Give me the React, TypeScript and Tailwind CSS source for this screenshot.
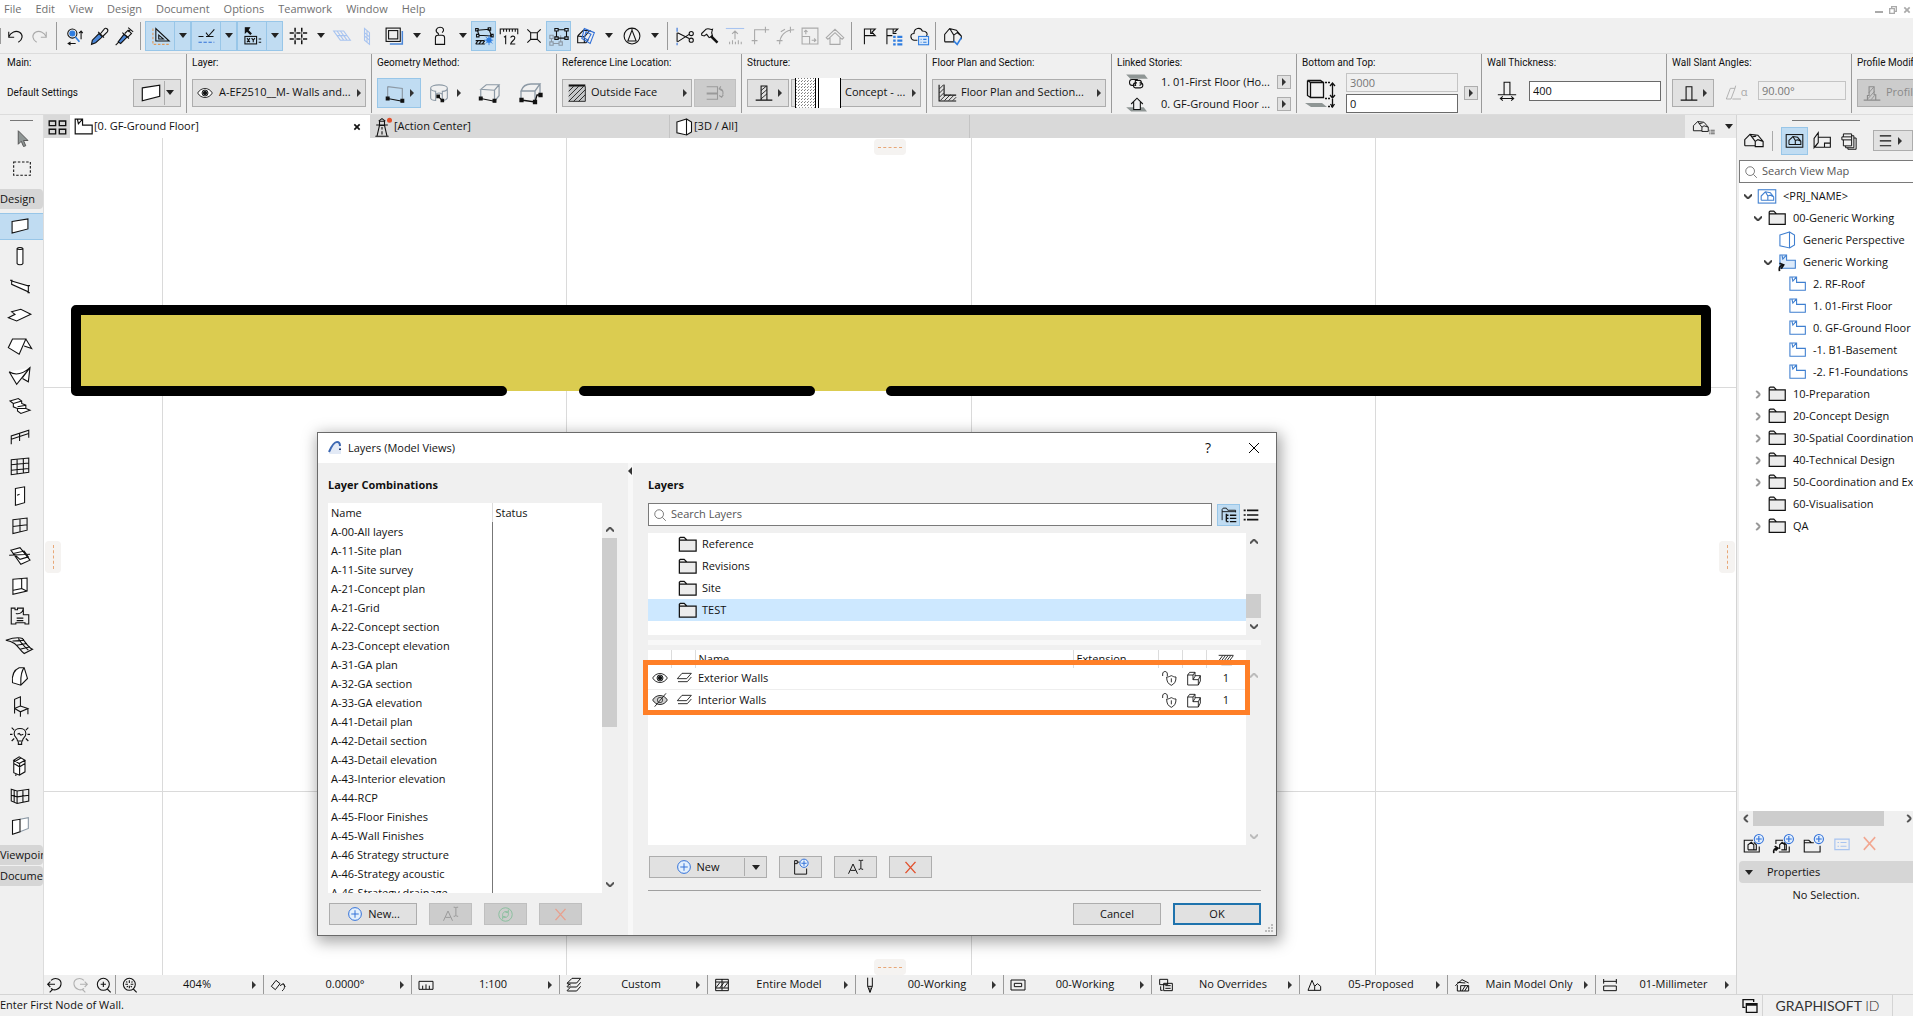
import type { ReactNode } from 'react';

const icons: Record<string, ReactNode> = {
  undo: <path d="M4.500 7v6.500H11M4.500 13C7 7 13 5 17.500 7.500c4.500 3 4 8.500-1.500 12" />,
  redo: <path d="M19.500 7v6.500H13M19.500 13C17 7 11 5 6.500 7.500c-4.500 3-4 8.500 1.500 12" />,
  findSelect: (
    <>
      <circle cx="10" cy="9" r="5.500" />
      <circle cx="10" cy="9" r="3" fill="#2f7de0" stroke="#2f7de0" />
      <path d="M13.500 13l5 6" stroke="#2f7de0" strokeWidth="2" />
      <path d="M20.500 16V6M18 8.500L20.500 6l2 2.500M14 21H5M8 19l-3 2 3 2" />
    </>
  ),
  eyedropper: (
    <>
      <path d="M3 22l1-5 8-8 4 4-8 7z" fill="#4a86d8" />
      <path d="M11 7l7 7M14 9l4-5c2-3 6 0 4 3l-5 5" />
    </>
  ),
  syringe: (
    <>
      <path d="M5 19l7-9 4 3-8 8z" fill="#4a86d8" />
      <path d="M2 23l4-4M10 8l8 7M13 9l4-4 4 4-4 4M17 2l6 5M20 4l-3 3" />
    </>
  ),
  setSquare: (
    <>
      <path d="M7 3v15h16zM10.500 11v4.500H16z" />
      <path d="M3.500 3v19H23" stroke="#e09a5a" strokeDasharray="3 2" />
    </>
  ),
  guide: (
    <>
      <path d="M3 12.500h6M12 12.500h9M12 8l3 4 7-8" />
      <path d="M3 19.500h19" stroke="#2f6fd8" strokeDasharray="4 2" />
    </>
  ),
  xy: (
    <>
      <path d="M4 2v6l2-2 4 4 1-1-4-4 2-3z" fill="currentColor" />
      <rect x="3.500" y="12.500" width="14" height="9" />
      <path d="M6 14.500l3.500 5M9.500 14.500l-3.500 5M11.500 14.500l2 2.500 2-2.500M13.500 17v2.500M20 15.500h3M20 19.500h3" />
    </>
  ),
  grid: (
    <path
      d="M8.500 2v5M8.500 10v4M8.500 17v5M16.500 2v5M16.500 10v4M16.500 17v5M2 8.500h5M10 8.500h5M18 8.500h5M2 15.500h5M10 15.500h5M18 15.500h5M8 8.500h1M16 8.500h1M8 15.500h1M16 15.500h1"
      strokeWidth="1.800"
    />
  ),
  planeFlat: <path d="M2 6h12l8 11H10zM6 11.500h12M6 6l8 11M10 6l8 11" stroke="#a8c4f0" />,
  planeVertical: <path d="M9 3l6 5v14l-6-5zM12 5.500v14M9 8l6 5M9 12l6 5" stroke="#a8c4f0" />,
  frame: (
    <>
      <path d="M7 21.500h15V6" stroke="#4a86d8" strokeWidth="1.800" />
      <rect x="2.500" y="2.500" width="17" height="16" />
      <rect x="5.500" y="5.500" width="11" height="10" />
    </>
  ),
  weight: <path d="M6.500 22v-8c0-2 1-3 3-3h5c2 0 3 1 3 3v8zM10 11V9C5 6 8 1.500 12 1.500S18 5 14.500 8" />,
  trace: (
    <>
      <path d="M4 5l14-1 3 8-15-1zM2 3h3v3H2zM17 2h3v3h-3zM3 10h3v3H3zM20 10h3v3h-3z" />
      <path d="M2 21.500l3-4M6 21.500l3-4M10 21.500l3-4M2 21.500h11M2 17.500h11" />
      <circle cx="18" cy="17" r="2.500" fill="#2f7de0" stroke="#2f7de0" />
      <path d="M18 11v12M12 17h11M14 13l8 8M22 13l-8 8" stroke="#2f7de0" strokeWidth="1" />
    </>
  ),
  ruler: <path d="M1.500 10V3.500h21V10M5.500 4v3M9 4v3M12.500 4v3M16 4v3M19.500 4v3M6 13.500l2-1.500v10M14 14c1-3 5-2 5 0 0 3-4 4-5 7.500h5.500" />,
  snap: <path d="M8 8h8v8H8zM4 4l4 4M16 16l4 4M20 4l-4 4M8 16l-4 4" />,
  nodes: (
    <>
      <path d="M1 11h4v4H1zM1 19h4v4H1zM12 19h4v4h-4zM3 15v4M5 21h7M14 11v8" stroke="#8c99a5" />
      <path d="M7 3h4v3H7zM19 3h4v3h-4zM7 13h4v3H7zM19 13h4v3h-4zM11 4.500h8M9 6v7M21 6v7M11 14.500h8" />
    </>
  ),
  cubeCut: (
    <>
      <path d="M2 12L9 5l9 1M2 12v8h10l3-4M2 12l8 1 6-7M10 13v7" />
      <path d="M10 3l12 5-5 13-10-6zM12 7l6 3-4 7-4-3z" stroke="#2f6fd8" />
    </>
  ),
  compass: (
    <>
      <circle cx="12" cy="12" r="9.500" />
      <path d="M12 5L7 18h10zM12 5V2.500" />
    </>
  ),
  scissors: (
    <>
      <path d="M2.500 2v5M2.500 20v3" stroke="#2f6fd8" />
      <path d="M2.500 8v11M3 8l14 7M3 19l14-9" />
      <circle cx="19.500" cy="9" r="2.500" />
      <circle cx="19.500" cy="17" r="2.500" />
    </>
  ),
  wrench: (
    <>
      <path d="M2 9l5-5c4-2 4 1 8 0l-1 4 1 4-4 2-3-4-3 2-3-1z" />
      <path d="M13 12l8 8" strokeWidth="3" />
    </>
  ),
  raise: (
    <>
      <path d="M1 3h22" stroke="#a8c4f0" />
      <path d="M12 16V6M8.500 9.500L12 6l3.500 3.500M5.500 22v-3M9 22v-5M12.500 22v-3M16 22v-5M19.500 22v-3" />
    </>
  ),
  corner: <path d="M5.500 22V4.500H23M2 17.500h7M18.500 1v7" />,
  fillet: <path d="M5.500 22C5.500 12 12 4.500 23 4.500M2 17.500h7M18.500 1v7M7 7l5-3" />,
  resize: <path d="M2.500 12V2.500h19v19H12M2.500 12.500h9v9h-9zM7 10V5M5 7l2-2 2 2M14 17h5M17 15l2 2-2 2" />,
  roofHouse: <path d="M1.500 14L12 4l10.500 10-2 2L12 8l-8.500 8zM6 14v8h12v-8" />,
  flag: <path d="M6.500 22V3.500h13l-4 4 4 4h-13M14 4v5h4" />,
  flagList: (
    <>
      <path d="M3.500 22V3.500h13l-4 4M3.500 11.500H10M11 4v5h4" />
      <path d="M11 13h3M16 13h6M11 17.500h3M16 17.500h6M11 22h3M16 22h6" stroke="#2f7de0" strokeWidth="2.500" />
    </>
  ),
  cloudList: (
    <>
      <path d="M10 17H6c-5-1-5-8 0-8 0-7 8-8 10-3 5 0 7 3 5 6" />
      <rect x="11.500" y="12.500" width="12" height="10" fill="#d8e8fa" stroke="#2f7de0" />
      <path d="M14 16h1M17 16h4M14 19.500h1M17 19.500h4" stroke="#2f7de0" />
    </>
  ),
  houseCheck: (
    <>
      <path d="M2 19v-9l6-7 8 2 6 7v4M2 19h11v-8L8 3M13 11l4-3 5 4" />
      <path d="M13 18l4 4 5-8" stroke="#2f7de0" strokeWidth="2" />
    </>
  ),
  wall: <path d="M2.500 6.500l19-3v12l-19 5z" fill="#fff" />,
  wallStraight: (
    <>
      <path d="M4 5l16 2v12M4 5v12" stroke="#8c99a5" />
      <path d="M4 18l16 3" />
      <path d="M2.500 16.500h3v3h-3zM18.500 19h3v3h-3z" fill="currentColor" />
    </>
  ),
  wallCurved: (
    <>
      <path d="M2 6c0-5 20-5 20 0v12c-1 2-3 3-6 3v-6c0-4-8-4-8 0v6c-3 0-6-1-6-3zM2 6c0 3 4 4 6 4V15M22 6c0 3-3 4-6 4v5" stroke="#8c99a5" />
      <path d="M11 16l5 5" />
      <path d="M9.500 14.500h3v3h-3zM14.500 19.500h3v3h-3z" fill="currentColor" />
    </>
  ),
  wallBox: (
    <>
      <path d="M3 8l6-5h14l-5 6zM3 8v10M18 9v12M23 3v12l-5 6" stroke="#8c99a5" />
      <path d="M3 18l15 3" />
      <path d="M1.500 16.500h3v3h-3zM16.500 19h3v3h-3z" fill="currentColor" />
    </>
  ),
  wallChain: (
    <>
      <path d="M2 10c2-6 6-7 10-7h9l-5 7H5zM16 10v11M21 3v10M2 10v9" stroke="#8c99a5" />
      <path d="M2 19l14 2 2-7h4" />
      <path d="M1 17.500h3v3H1zM14.500 19.500h3v3h-3zM20 12.500h3v3h-3z" fill="currentColor" />
    </>
  ),
  hatchBlock: (
    <>
      <rect x="2" y="4" width="20" height="18" fill="#c4c6c8" stroke="none" />
      <path d="M22 4v18H2M2 10l6-6M2 16L14 4M2 22L20 4M8 22L22 8M14 22l8-8" strokeWidth="1" />
      <path d="M2 3h20" strokeWidth="2.500" />
    </>
  ),
  flip: <path d="M2 4.500h13v15H2M2 12h13M2 13h13M17 7c5 0 6 6 3 10M19 4l-2 3 3 2M17 15l3 2 2-3" />,
  structure: (
    <>
      <path d="M2 20.500h20M8.500 20V3.500h7V20" />
      <path d="M8.500 9l6-5M8.500 14l7-6M8.500 19l7-6" strokeWidth="1" />
    </>
  ),
  slant: <path d="M2 20.500h20M8.500 20V4.500h7V20" />,
  sectionHatch: (
    <>
      <path d="M2.500 2v19.500H23M8.500 2v12.500H23" />
      <path d="M3 7l5-5M3 12l5-5M3 17l5-5M4 21l7-7M9 21l7-7M14 21l6-6M19 21l4-4" strokeWidth="1" />
    </>
  ),
  linkTop: (
    <>
      <path d="M-1 3h22l4 5H4z" fill="#8f9695" stroke="none" />
      <path d="M13 9H6c-4 0-4 7 0 7h3M12 13h-2c-3 0-3 6 0 6h6c4 0 4-6 0-6h-1M11 16h-1V10h5c3 0 3 6 0 6" />
    </>
  ),
  linkBottom: (
    <>
      <path d="M-1 16h21l4 5H5z" fill="#8f9695" stroke="none" />
      <path d="M5 12l7-7 7 7M8 10v8.500h8V10" fill="#f0f0f0" />
    </>
  ),
  thickness: <path d="M1 16.500h22M8.500 16V1.500h7V16M4 21h16M7 18.500L4 21l3 2.500M17 18.500l3 2.500-3 2.500" />,
  alpha: <path d="M2 21L8 5h7L9 21zM15 5l1-4M11 21h13" />,
  profile: (
    <>
      <path d="M2 20.500h20M6.500 20v-5h2V4.500h6V14h2v6" />
      <path d="M8 12l6-7M7 19l8-9M11 20l4-5" strokeWidth="1" />
    </>
  ),
  eye: (
    <>
      <path d="M1 12c5-9 17-9 22 0-5 9-17 9-22 0z" fill="#fff" />
      <circle cx="12" cy="12" r="4.500" fill="#9aa0a4" />
      <circle cx="12" cy="12" r="2.500" fill="currentColor" />
    </>
  ),
  eyeOff: (
    <>
      <path d="M1 12c5-9 17-9 22 0-5 9-17 9-22 0z" fill="#d0d0d0" />
      <circle cx="12" cy="12" r="4" strokeWidth="1" />
      <path d="M4 22L21 2" />
    </>
  ),
  tiles: <path d="M3.500 5.500h7v5h-7zM14.500 5.500h7v5h-7zM3.500 14.500h7v5h-7zM14.500 14.500h7v5h-7z" strokeWidth="1.500" />,
  story: <path d="M3.500 19.500v-16h8v6.500h10.500v9.500zM6 4l1 4.500L11 4" />,
  storyLinked: (
    <>
      <path d="M3.500 19.500v-16h8v6.500h10.500v9.500z" fill="#dceafa" />
      <path d="M6 4l1 4.500L11 4" />
      <path d="M3 23c-1-5 1-7 4-7M3 13.500l5 2L5 20" stroke="#111" strokeWidth="2" />
    </>
  ),
  lighthouse: (
    <>
      <path d="M9 10h6l3 13H6zM5 9.500h14M9 9V5h6v4M8 5l4-3 4 3M12 12v3M12 17v4M4 23h16" />
      <circle cx="21" cy="4" r="3" fill="#e2502c" stroke="none" />
    </>
  ),
  view3d: <path d="M3.500 6L15 2.500v19L3.500 19zM15 2.500l6 3.500v12l-6 3.500" fill="#fff" />,
  house: <path d="M2 18v-7l6-6 9 1 6 7v6h-9v-6L8 5M2 18h12M14 13l3-2 6 2M10 8l5-1" />,
  houseFrame: (
    <>
      <rect x="1.500" y="4.500" width="21" height="16" />
      <path d="M5 17v-5l5-5 6 1 4 5v4h-7v-5l-3-5M5 17h8M13 12l3-1 4 2" />
    </>
  ),
  layoutBook: <path d="M2.500 20V9l5-7v12zM7.500 7.500H22v12h-7v-5h7M7.500 14l-4 5.500M15 19.500H4" />,
  publisher: <path d="M4.500 6.500v-4h11v4M2.500 6.500h13v4h-13zM4.500 10.500v8h11v-8M15.500 5h3v16h-11v-2.500M18.500 8h3v15h-11v-2" />,
  menu: <path d="M4 5.500h16M4 12.500h16M4 19.500h16" strokeWidth="1.500" />,
  folder: <path d="M3.500 19V5.500l1-1h4l3 3h9.500V19zM3.500 7.500h8" fill="#ececec" />,
  search: (
    <>
      <circle cx="10.500" cy="10.500" r="7.500" />
      <path d="M16 16l6 6" />
    </>
  ),
  plus: (
    <>
      <circle cx="12" cy="12" r="8.500" fill="#e3effc" stroke="#2f6fd8" />
      <path d="M12 7v10M7 12h10" stroke="#2f6fd8" />
    </>
  ),
  rename: <path d="M2 21L8 8l6 13M4.500 16.500h7M18.500 3.500v11M15.500 3h2l1 1 1-1h2M15.500 15h2l1-1 1 1h2" />,
  refresh: (
    <>
      <circle cx="12" cy="12" r="9.500" />
      <path d="M8 14c-1-5 4-8 8-5M16 5v4h-4M16 10c1 5-4 8-8 5M8 19v-4h4" />
    </>
  ),
  cross: <path d="M4 3l16 18M20 3L4 21" strokeWidth="2.200" />,
  crossBold: <path d="M4 4l16 16M20 4L4 20" strokeWidth="5" />,
  addHouse: (
    <>
      <path d="M12 7.500H1.500v14h18V15M6 19v-6l4-3 3 3v6M6 19h10v-6l-3-3" />
      <circle cx="19" cy="6" r="5.500" fill="#e3effc" stroke="#2f6fd8" />
      <path d="M19 2.500v7M15.500 6h7" stroke="#2f6fd8" />
    </>
  ),
  cloneHouse: (
    <>
      <path d="M12 7.500H3.500V12M7 21.500h12.500V15M8 18v-5l3-3 3 3v6M10 19h6v-6l-3-3" />
      <path d="M1 23c-1-4 1-6 4-6M2 14.500l4 2.500-3 3" strokeWidth="2" />
      <circle cx="19" cy="6" r="5.500" fill="#e3effc" stroke="#2f6fd8" />
      <path d="M19 2.500v7M15.500 6h7" stroke="#2f6fd8" />
    </>
  ),
  addFolder: (
    <>
      <path d="M13 10.500H10L7 7.500H1.500v14h19V14M2 10.500h8" />
      <circle cx="19" cy="6" r="5.500" fill="#e3effc" stroke="#2f6fd8" />
      <path d="M19 2.500v7M15.500 6h7" stroke="#2f6fd8" />
    </>
  ),
  newFolder: (
    <>
      <path d="M10 5.500H7V3.500H3.500v18h16V14M7 5.500v2H3.500" />
      <circle cx="16" cy="7" r="5.500" fill="#e3effc" stroke="#2f6fd8" />
      <path d="M16 3.500v7M12.500 7h7" stroke="#2f6fd8" />
    </>
  ),
  listBox: <path d="M2.500 5.500h19v14h-19zM6 10h2M10 10h8M6 15h2M10 15h8" strokeWidth="1.600" />,
  treeView: (
    <>
      <path d="M3 20V5l1.500-2H9l2 3h11v3M3 8h19" />
      <path d="M9 11v11M9 13h3M9 17.500h3M9 22h3M14 13h9M14 17.500h9M14 22h9" strokeWidth="2" />
    </>
  ),
  listView: <path d="M1 5h3M6 5h17M1 12h3M6 12h17M1 19h3M6 19h17" strokeWidth="2.500" />,
  layer: <path d="M2 13l7-8h14l-7 8zM3 17.500h14l6-7" fill="#fff" />,
  unlock: <path d="M8.500 10.500c4 0 4-1 7-2 3 1 3 2 7 2 0 7-2 10-7 12.500-5-2.500-7-5.500-7-12.500zM15.500 12.500v6M2.500 9V6c0-5 7-5 7 0v3" />,
  solid: <path d="M2.500 7.500h8v7h8v8h-16zM2.500 7.500l3-4h8v6l-3 5M13.500 8.500h8v8l-3 6M10.500 7.500l3-4M18.500 14.500l3-6" fill="#fff" />,
  hatch: (
    <>
      <path d="M1 6.500h22M1 15.500h22M5 20.500h16" />
      <path d="M1 15l6-8M5 15l6-8M9 15l6-8M13 15l6-8M17 15l6-8" />
    </>
  ),
  cursor: <path d="M7 1v18l4-4 3 7 3-1-3-7h6z" fill="#8f9695" stroke="#555" />,
  marquee: <path d="M2 3.500h20v16H2z" strokeDasharray="3 2" />,
  column: <path d="M8.500 3c1-1.500 6-1.500 7 0v18c-1 2-6 2-7 0zM8.500 3c1 1.500 6 1.500 7 0" fill="#fff" />,
  beam: <path d="M2 6l20 6v7L2 10zM0 5h3M21 20h3M20 11.500h4" fill="#fff" />,
  slab: <path d="M-2 14l8-4-4-3 11-3 12 6-17 8z" fill="#fff" />,
  roof: <path d="M3 3.500h16L11 22-2 14zM19 3.500L26 15l-9-3" fill="#fff" />,
  shell: <path d="M-1 7c8 5 17 2 25-5l-2 17-7-4M24 2L8 22-1 7M15 14l9-12" fill="#fff" />,
  stair: <path d="M0 6l10-3 4 3v3l5 2v4l5 2-11 4-4-3v-3l-5-2V9zM4 9l10-3M9 13l10-2M9 15l10 0" fill="#fff" />,
  railing: <path d="M1.500 22V12l21-7v9M1.500 16l21-7M11.500 9v9" />,
  curtain: <path d="M1.500 4.500l21-2v17l-21 3zM8.500 4v18M16 3v17.500M1.500 10.500l21-2M1.500 17l21-2" />,
  door: <path d="M6.500 3l11-2v19l-11 3zM8.500 11l3-1" fill="#fff" />,
  window: <path d="M3.500 4.500l17-2v14.500l-17 4zM12 3.500v15M3.500 12.500l17-2" />,
  skylight: <path d="M1 5l11-3 12 15-11 5zM-1 11l25-1M4 9l13-3 5 7-10 3z" fill="#fff" />,
  opening: <path d="M3.500 4l17-1.500V18l-17 4zM14 3v12L4 17M14 15l6 3" fill="#fff" />,
  zone: <path d="M1.500 21.500v-19H6v2h3v-2h7v8h6.500v11H18V20H7v1.500zM7 9c5 1 8-1 9-6M8 14.500h8M8 17.500h8" />,
  mesh: <path d="M-5 5c9-3 15-4 20-2 4 5 6 10 12 13l-10 5C10 16 9 7-5 5zM3 6l14-1M8 11l12-2M12 16l12-3M10 3c4 7 7 9 12 14" />,
  morph: <path d="M3 20c-1-9 1-15 8-18h6l4 13-8 8zM17 2c-5 6-4 14-4 21" fill="#fff" />,
  chair: <path d="M5.500 21V4l7-3v11l-7 3M12.500 12l9 3-9 4-7-4M21.500 15v7M12.500 19v6" />,
  lamp: <path d="M9 18c0-4-4-4-4-9 0-8 14-8 14 0 0 5-4 5-4 9zM10 19v3h4v-3M9 10l2-1 2 2 3-1M2 2l3 3M22 2l-3 3M0 10h3M21 10h3M2 18l3-3M22 18l-3-3" />,
  equipment: <path d="M4.500 5L11 1l7 4-7 4zM4.500 5v15l7 3V10M18 5v14l-7 4M4.500 9l7 4 6.500-4M7 22v2M6 6.500l7-4" fill="#fff" />,
  curtainCorner: <path d="M1.500 4l7 2 14-2v14l-14 3-7-3zM8.500 6v15M1.500 11l7 2 14-2M5 5v14M15.500 5v15" />,
  wallEnd: (
    <>
      <path d="M12 4l10-2v13l-10 4" stroke="#8c99a5" fill="#fff" />
      <path d="M3 5.500L12 4v15l-9 3z" fill="#fff" />
    </>
  ),
  viewBack: <path d="M6 5c7-6 16-1 15 6s-10 11-15 6M9 18l-5 5M1 11h11M5 7l-4 4 4 4" strokeWidth="1.600" />,
  viewForward: <path d="M18 5C11-1 2 4 3 11s10 11 15 6M15 18l5 5M23 11H12M19 7l4 4-4 4" strokeWidth="1.600" />,
  zoomIn: <path d="M11 2a9 9 0 100 18 9 9 0 000-18zM17 18l5 5M11 7v8M7 11h8" strokeWidth="1.600" />,
  zoomFit: <path d="M11 2a9 9 0 100 18 9 9 0 000-18zM17 18l5 5M11 5v4M11 13v4M5 11h4M13 11h4M6 7l2 1M16 7l-2 1M7 15l2-1M15 15l-2-1" strokeWidth="1.600" />,
  orientation: <path d="M2 14l7-9 6 5-7 9zM18 21c4-3 5-7 2-11M15 13l5-3 3 5" strokeWidth="1.500" />,
  scale: <path d="M1.500 6.500h21v12h-21zM7 18v-5M12 18v-7M17 18v-5" strokeWidth="1.500" />,
  layers: <path d="M2 9l7-7h13l-6 7zM2 9v1l5 2M2 15h14l6-7M2 15v-1l4-4M2 21h14l6-7M2 21v-1l4-4" strokeWidth="1.500" />,
  modelFilter: <path d="M2.500 3.500h19v17h-19zM2.500 7.500h19M2.500 16.500h19M3 16l6-8M9 16l6-8M15 16l6-8M12 3v17" strokeWidth="1.500" />,
  pen: <path d="M8.500 1v13l3.500 9 3.500-9V1M12 16v7M8.500 14h7" strokeWidth="1.500" />,
  docFrame: <path d="M1.500 4.500h21v15h-21zM6.500 9.500h11v5h-11z" strokeWidth="1.500" />,
  overrides: <path d="M2.500 3.500h12v8h-12zM8.500 9.500h13v11h-13zM11 13h8M11 17h8M4 14v6h3" strokeWidth="1.500" />,
  renovation: <path d="M3 20h19v-6l-5-4-4 4v6M3 20L9 5l4 9" strokeWidth="1.500" />,
  structureFilter: <path d="M2 13l10-9 10 5M5 12v9h5M10 21v-8h12v8zM12 21l5-8M16 21l5-8M5 8l12 1" strokeWidth="1.500" />,
  dimension: <path d="M2.500 6.500h19M2.500 3v7M21.500 3v7M2.500 13.500h19v7h-19z" strokeWidth="1.500" />,
  windows: <path d="M5 14H1.500V2.500h16V6M6.500 8.500h16v13h-16zM6.500 10.500h16" strokeWidth="2" />,
  restore: <path d="M8 8V2h14v14h-6M2 8h14v14H2z" strokeWidth="4" />,
};

function Icon({ name, className = 'size-6' }: { name: string; className?: string }) {
  return (
    <svg
      viewBox="0 0 24 24"
      fill="none"
      stroke="currentColor"
      strokeWidth="1.3"
      className={`shrink-0 overflow-visible ${className}`}
      aria-hidden="true"
    >
      {icons[name]}
    </svg>
  );
}

function Down() {
  return (
    <svg viewBox="0 0 8 5" className="h-[5px] w-2 shrink-0 fill-[#222]" aria-hidden="true">
      <path d="M0 0h8L4 5z" />
    </svg>
  );
}

function Right() {
  return (
    <svg viewBox="0 0 4 8" className="h-2 w-1 shrink-0 fill-[#333]" aria-hidden="true">
      <path d="M0 0l4 4-4 4z" />
    </svg>
  );
}

function Chevron({ className = '' }: { className?: string }) {
  return (
    <svg viewBox="0 0 8 5" fill="none" stroke="currentColor" strokeWidth="2" className={`h-[5px] w-2 shrink-0 ${className}`} aria-hidden="true">
      <path d="M0 0.500l4 4 4-4" />
    </svg>
  );
}

const box = 'flex items-center border border-[#adadad] bg-[#e1e1e1]';

type Tool = { icon?: string; label?: string; menu?: boolean; active?: boolean; dim?: boolean };

const tools: Tool[] = [
  { icon: 'undo', label: 'Undo' },
  { icon: 'redo', label: 'Redo', dim: true },
  {},
  { icon: 'findSelect', label: 'Find & Select' },
  { icon: 'eyedropper', label: 'Pick Up Parameters' },
  { icon: 'syringe', label: 'Inject Parameters' },
  {},
  { icon: 'setSquare', label: 'Guide Lines', menu: true, active: true },
  { icon: 'guide', label: 'Snap Guides', menu: true, active: true },
  { icon: 'xy', label: 'Tracker', menu: true, active: true },
  { icon: 'grid', label: 'Grid Snap', menu: true },
  { icon: 'planeFlat', label: 'Editing Plane' },
  { icon: 'planeVertical', label: 'Vertical Plane' },
  { icon: 'frame', label: 'Frame', menu: true },
  { icon: 'weight', label: 'Gravity', menu: true },
  { icon: 'trace', label: 'Trace', active: true },
  { icon: 'ruler', label: 'Measure' },
  { icon: 'snap', label: 'Snap Points' },
  { icon: 'nodes', label: 'Suspend Groups', active: true },
  { icon: 'cubeCut', label: 'Cutaway', menu: true },
  { icon: 'compass', label: 'North', menu: true },
  {},
  { icon: 'scissors', label: 'Trim' },
  { icon: 'wrench', label: 'Adjust' },
  { icon: 'raise', label: 'Elevate', dim: true },
  { icon: 'corner', label: 'Intersect', dim: true },
  { icon: 'fillet', label: 'Fillet', dim: true },
  { icon: 'resize', label: 'Resize', dim: true },
  { icon: 'roofHouse', label: 'Trim to Roof', dim: true },
  {},
  { icon: 'flag', label: 'Issue' },
  { icon: 'flagList', label: 'Issue Organizer' },
  { icon: 'cloudList', label: 'Cloud Issues' },
  {},
  { icon: 'houseCheck', label: 'Model Check' },
];

function ToolBar() {
  return (
    <div className="flex h-9 shrink-0 items-center border-b border-[#dcdcdc]">
      <span className="mr-px h-4 w-px shrink-0 bg-[#9a9a9a]" />
      {tools.map((t, i) => {
        if (!t.icon) return <span key={i} className="mx-1 h-7 w-px shrink-0 bg-[#9a9a9a]" />;
        const tone = t.active ? 'border-[#98c6e8] bg-[#c0dcf2]' : 'border-transparent';
        return (
          <span key={i} className="flex h-[30px] shrink-0">
            <button
              aria-label={t.label}
              className={`flex items-center justify-center border ${tone} ${t.menu ? 'w-[30px]' : 'w-[25px]'} ${t.dim ? 'text-[#a9a9a9]' : ''}`}
            >
              <Icon name={t.icon} className="size-5" />
            </button>
            {t.menu && (
              <button aria-label={`${t.label} options`} className={`flex w-4 items-center justify-center border border-l-0 ${tone}`}>
                <Down />
              </button>
            )}
          </span>
        );
      })}
    </div>
  );
}

function Group({ label, children }: { label: string; children: ReactNode }) {
  return (
    <div className="flex h-[59px] w-[185px] shrink-0 flex-col border-r border-[#9a9a9a] px-[5px]">
      <p className="h-[18px] font-['Roboto',sans-serif] text-[10px] leading-[18px] whitespace-nowrap">{label}</p>
      <div className="flex min-w-0 flex-1 items-center gap-[2px]">{children}</div>
    </div>
  );
}

function InfoBar() {
  return (
    <div className="flex h-[61px] shrink-0 overflow-hidden border-b border-[#dcdcdc] pl-[2px] whitespace-nowrap">
      <Group label="Main:">
        <span className="flex-1 font-['Roboto',sans-serif] text-[10px]">Default Settings</span>
        <button aria-label="Wall defaults" className={`${box} h-7 w-12 justify-between px-1.5`}>
          <Icon name="wall" className="size-[22px]" />
          <span className="h-6 w-px bg-[#adadad]" />
          <Down />
        </button>
      </Group>
      <Group label="Layer:">
        <button className={`${box} h-7 w-full gap-1.5 px-1`}>
          <Icon name="eye" className="size-4" />
          <span className="flex-1 text-left">A-EF2510__M- Walls and...</span>
          <Right />
        </button>
      </Group>
      <Group label="Geometry Method:">
        <button aria-label="Straight" className="flex h-[30px] w-11 items-center justify-between border border-[#98c6e8] bg-[#c0dcf2] px-1.5">
          <Icon name="wallStraight" className="size-[22px]" />
          <Right />
        </button>
        <button aria-label="Curved" className="flex w-11 items-center justify-between px-1.5">
          <Icon name="wallCurved" className="size-5" />
          <Right />
        </button>
        <button aria-label="Trapezoid" className="flex flex-1 justify-center">
          <Icon name="wallBox" className="size-[22px]" />
        </button>
        <button aria-label="Polygonal" className="flex flex-1 justify-center">
          <Icon name="wallChain" className="size-6" />
        </button>
      </Group>
      <Group label="Reference Line Location:">
        <button className={`${box} h-7 flex-1 gap-1 px-1`}>
          <Icon name="hatchBlock" className="size-5" />
          <span className="flex-1 text-left">Outside Face</span>
          <Right />
        </button>
        <button aria-label="Flip wall" disabled className="flex h-7 w-[42px] items-center justify-center border border-[#c0c0c0] bg-[#ccc] text-[#9a9a9a]">
          <Icon name="flip" className="size-5" />
        </button>
      </Group>
      <Group label="Structure:">
        <button aria-label="Basic structure" className={`${box} h-7 w-[42px] justify-between px-1.5`}>
          <Icon name="structure" className="size-5" />
          <Right />
        </button>
        <button className={`${box} h-7 flex-1 gap-1 pr-1 pl-[3px]`}>
          <svg viewBox="0 0 46 30" className="h-[30px] w-[46px] shrink-0" aria-hidden="true">
            <defs>
              <pattern id="dots" width="3" height="3" patternUnits="userSpaceOnUse">
                <rect width="3" height="3" fill="#fff" />
                <rect width="1" height="1" fill="#777" />
                <rect x="1" y="2" width="1" height="1" fill="#999" />
              </pattern>
            </defs>
            <rect width="46" height="30" fill="#fff" />
            <rect width="21" height="30" fill="url(#dots)" />
            <path d="M.5 0v30M20.500 0v30M23.500 0v30M45.500 0v30" stroke="#000" />
          </svg>
          <span className="flex-1 text-left">Concept - ...</span>
          <Right />
        </button>
      </Group>
      <Group label="Floor Plan and Section:">
        <button className={`${box} h-7 w-full gap-1 px-1`}>
          <Icon name="sectionHatch" className="size-5" />
          <span className="flex-1 text-left">Floor Plan and Section...</span>
          <Right />
        </button>
      </Group>
      <Group label="Linked Stories:">
        <div className="flex flex-1 flex-col gap-[2px] pl-2.5">
          {[
            ['linkTop', '1. 01-First Floor (Ho...'],
            ['linkBottom', '0. GF-Ground Floor ...'],
          ].map(([icon, text]) => (
            <div key={icon} className="flex h-5 items-center">
              <Icon name={icon} className="size-5" />
              <span className="ml-3.5 flex-1 text-left">{text}</span>
              <button aria-label={`Change ${text}`} className={`${box} size-[14px] justify-center`}>
                <Right />
              </button>
            </div>
          ))}
        </div>
      </Group>
      <Group label="Bottom and Top:">
        <div className="flex flex-1 items-center pl-[2px]">
          <svg viewBox="0 0 32 30" fill="none" stroke="currentColor" strokeWidth="1.300" className="h-[30px] w-8" aria-hidden="true">
            <path d="M1 25h17l5 4H7z" fill="#8f9695" stroke="none" />
            <path d="M6.500 4.500h13v15h-13zM3.500 2.500v15l3 2M3.500 2.500h13l3 2M3.500 2.500l3 2" />
            <path d="M21 4.500h6M21 20.500h6M24 28.500h4" strokeDasharray="2 1" />
            <path d="M28.500 5v15M26 8l2.500-3L31 8M26 17l2.500 3 2.500-3M28.500 21v8M26.500 26l2 3 2-3" />
          </svg>
          <div className="ml-2.5 flex w-28 flex-col gap-[2px]">
            <input aria-label="Wall height" disabled defaultValue="3000" className="h-[19px] w-full border border-[#c4c4c4] bg-[#f0f0f0] px-[3px] text-[#777]" />
            <input aria-label="Base elevation" defaultValue="0" className="h-[19px] w-full border border-[#6a6a6a] bg-white px-[3px]" />
          </div>
          <button aria-label="Elevation options" className={`${box} ml-1.5 size-[14px] justify-center`}>
            <Right />
          </button>
        </div>
      </Group>
      <Group label="Wall Thickness:">
        <div className="flex w-full items-center pb-1 pl-2.5">
          <Icon name="thickness" className="size-5" />
          <input aria-label="Wall thickness" defaultValue="400" className="ml-3 h-5 min-w-0 flex-1 border border-[#6a6a6a] bg-white px-[3px]" />
        </div>
      </Group>
      <Group label="Wall Slant Angles:">
        <button aria-label="Slant" className={`${box} h-7 w-[42px] justify-between px-1.5`}>
          <Icon name="slant" className="size-5" />
          <Right />
        </button>
        <span className="flex w-10 items-center justify-center text-[#a9a9a9]">
          <Icon name="alpha" className="size-4" />α
        </span>
        <input aria-label="Slant angle" disabled defaultValue="90.00°" className="mb-1 h-[19px] min-w-0 flex-1 border border-[#c4c4c4] bg-[#f0f0f0] px-[3px] text-[#777]" />
      </Group>
      <Group label="Profile Modifiers:">
        <button disabled className="flex h-7 w-full items-center gap-1 border border-[#adadad] bg-[#ccc] px-1 text-[#8a8a8a]">
          <Icon name="profile" className="size-5" />
          Profile...
        </button>
      </Group>
    </div>
  );
}

const designTools = [
  ['wall', 'Wall'],
  ['column', 'Column'],
  ['beam', 'Beam'],
  ['slab', 'Slab'],
  ['roof', 'Roof'],
  ['shell', 'Shell'],
  ['stair', 'Stair'],
  ['railing', 'Railing'],
  ['curtain', 'Curtain Wall'],
  ['door', 'Door'],
  ['window', 'Window'],
  ['skylight', 'Skylight'],
  ['opening', 'Opening'],
  ['zone', 'Zone'],
  ['mesh', 'Mesh'],
  ['morph', 'Morph'],
  ['chair', 'Object'],
  ['lamp', 'Lamp'],
  ['equipment', 'Equipment'],
  ['curtainCorner', 'Corner Window'],
  ['wallEnd', 'Wall End'],
];

function Toolbox() {
  const section = 'h-5 w-[43px] shrink-0 overflow-hidden rounded-r-sm bg-[#d6d6d6] text-left leading-5 whitespace-nowrap';
  return (
    <div className="flex w-11 shrink-0 flex-col border-r border-[#dcdcdc] pt-[5px]">
      <span className="mx-2.5 h-px shrink-0 bg-[#777]" />
      <button aria-label="Arrow" className="flex h-9 shrink-0 items-center justify-center">
        <Icon name="cursor" className="size-[18px]" />
      </button>
      <button aria-label="Marquee" className="flex h-6 shrink-0 items-center justify-center">
        <Icon name="marquee" className="size-5" />
      </button>
      <button className={`${section} mt-2`}>Design</button>
      <div className="mt-[2px] mb-1 flex flex-col">
        {designTools.map(([icon, label], i) => (
          <span key={icon} className="flex h-[30px] items-center">
            <button
              aria-label={label}
              className={`flex h-[27px] w-[43px] items-center justify-center border-y pr-[3px] ${i === 0 ? 'border-[#98c6e8] bg-[#c0dcf2]' : 'border-transparent'}`}
            >
              <Icon name={icon} className="size-5" />
            </button>
          </span>
        ))}
      </div>
      <button className={section}>Viewpoint</button>
      <button className={`${section} mt-px`}>Document</button>
    </div>
  );
}

function Tabs() {
  return (
    <div className="flex h-[23px] shrink-0 bg-[#d9d9d9]">
      <button aria-label="Tab overview" className="flex w-[26px] items-center justify-center">
        <Icon name="tiles" className="size-[22px]" />
      </button>
      <div className="flex w-[300px] items-center bg-white pr-[7px] pl-0.5">
        <Icon name="story" className="size-[22px]" />
        <span className="flex-1">[0. GF-Ground Floor]</span>
        <button aria-label="Close tab" className="flex size-3 items-center justify-center">
          <Icon name="crossBold" className="size-2" />
        </button>
      </div>
      <button className="flex w-[300px] items-center border-r border-[#c4c4c4] pl-0.5">
        <Icon name="lighthouse" className="mr-[2px] size-5" />
        [Action Center]
      </button>
      <button className="flex w-[300px] items-center border-r border-[#c4c4c4] pl-1">
        <Icon name="view3d" className="size-5" />
        [3D / All]
      </button>
      <button aria-label="View options" className="ml-auto flex w-[51px] items-center justify-end bg-[#ececec] pr-[3px]">
        <Icon name="house" className="size-[17px]" />
        <Icon name="listView" className="mt-2.5 size-[6px]" />
        <span className="ml-2.5 flex"><Down /></span>
      </button>
    </div>
  );
}

function Canvas() {
  const handle = 'absolute flex items-center justify-center rounded-sm bg-[#f5f3f1]';
  return (
    <div className="relative min-h-0 flex-1 overflow-hidden bg-white">
      <svg className="absolute inset-0 size-full" aria-hidden="true">
        <path d="M118.500 0v900M522.500 0v900M927.500 0v900M1331.500 0v900M0 249.500h1900M0 653.500h1900" stroke="#dadada" />
        <rect x="32" y="172" width="1630" height="81" fill="#dbcc50" />
        <path d="M458 253H32V172H1662V253H847M540 253H766" fill="none" stroke="#000" strokeWidth="10" strokeLinecap="round" strokeLinejoin="round" />
      </svg>
      <div className={`${handle} top-px left-1/2 h-4 w-8 -translate-x-1/2`}>
        <span className="w-6 border-t border-dashed border-[#e8a878]" />
      </div>
      <div className={`${handle} bottom-0 left-1/2 h-4 w-8 -translate-x-1/2`}>
        <span className="w-6 border-t border-dashed border-[#e8a878]" />
      </div>
      <div className={`${handle} top-1/2 left-px h-8 w-4 -translate-y-1/2`}>
        <span className="h-6 border-l border-dashed border-[#e8a878]" />
      </div>
      <div className={`${handle} top-1/2 right-px h-8 w-4 -translate-y-1/2`}>
        <span className="h-6 border-l border-dashed border-[#e8a878]" />
      </div>
    </div>
  );
}

const quickOptions = [
  ['zoomFit', '404%'],
  ['orientation', '0.0000°'],
  ['scale', '1:100'],
  ['layers', 'Custom'],
  ['modelFilter', 'Entire Model'],
  ['pen', '00-Working'],
  ['docFrame', '00-Working'],
  ['overrides', 'No Overrides'],
  ['renovation', '05-Proposed'],
  ['structureFilter', 'Main Model Only'],
  ['dimension', '01-Millimeter'],
];

function QuickOptions() {
  return (
    <div className="flex h-[19px] shrink-0 items-center">
      <div className="flex w-[71px] shrink-0 justify-between px-[3px]">
        <button aria-label="Previous zoom"><Icon name="viewBack" className="size-4" /></button>
        <button aria-label="Next zoom" className="text-[#b0b0b0]"><Icon name="viewForward" className="size-4" /></button>
        <button aria-label="Zoom in"><Icon name="zoomIn" className="size-4" /></button>
      </div>
      {quickOptions.map(([icon, text], i) => (
        <button key={i} className="flex h-[19px] w-[148px] min-w-0 items-center border-l border-[#9a9a9a] pr-[7px] pl-1.5 whitespace-nowrap last:flex-1">
          <Icon name={icon} className="size-4" />
          <span className="flex-1 pl-1 text-center">{text}</span>
          <Right />
        </button>
      ))}
    </div>
  );
}

type Node = { text: string; level: number; icon: string; open?: boolean };

const viewMap: Node[] = [
  { text: '<PRJ_NAME>', level: 0, icon: 'houseFrame', open: true },
  { text: '00-Generic Working', level: 1, icon: 'folder', open: true },
  { text: 'Generic Perspective', level: 2, icon: 'view3d' },
  { text: 'Generic Working', level: 2, icon: 'storyLinked', open: true },
  { text: '2. RF-Roof', level: 3, icon: 'story' },
  { text: '1. 01-First Floor', level: 3, icon: 'story' },
  { text: '0. GF-Ground Floor', level: 3, icon: 'story' },
  { text: '-1. B1-Basement', level: 3, icon: 'story' },
  { text: '-2. F1-Foundations', level: 3, icon: 'story' },
  { text: '10-Preparation', level: 1, icon: 'folder', open: false },
  { text: '20-Concept Design', level: 1, icon: 'folder', open: false },
  { text: '30-Spatial Coordination', level: 1, icon: 'folder', open: false },
  { text: '40-Technical Design', level: 1, icon: 'folder', open: false },
  { text: '50-Coordination and Export', level: 1, icon: 'folder', open: false },
  { text: '60-Visualisation', level: 1, icon: 'folder' },
  { text: 'QA', level: 1, icon: 'folder', open: false },
];

const indents = ['pl-[3px]', 'pl-[13px]', 'pl-[23px]', 'pl-[33px]'];

function Navigator() {
  return (
    <aside className="flex w-[177px] shrink-0 flex-col overflow-hidden border-l border-[#d4d4d4] pt-[5px] pl-[2px]">
      <span className="mx-auto h-px w-[68px] shrink-0 bg-[#777]" />
      <div className="flex h-[39px] shrink-0 items-center pl-1">
        <button aria-label="Project map"><Icon name="house" className="size-[21px]" /></button>
        <span className="mx-2 h-5 w-px bg-[#aaa]" />
        <button aria-label="View map" className="flex h-7 w-[30px] items-center justify-center border border-[#98c6e8] bg-[#c0dcf2]">
          <Icon name="houseFrame" className="size-[19px]" />
        </button>
        <button aria-label="Layout book" className="flex w-[30px] justify-center"><Icon name="layoutBook" className="size-5" /></button>
        <button aria-label="Publisher" className="flex w-[30px] justify-center"><Icon name="publisher" className="size-[18px]" /></button>
        <button aria-label="Navigator menu" className={`${box} ml-2.5 h-[21px] w-10 shrink-0 gap-1 px-[3px]`}>
          <Icon name="menu" className="size-[17px]" />
          <Right />
        </button>
      </div>
      <label className="flex h-[23px] shrink-0 items-center border border-r-0 border-[#7a7a7a] bg-white pl-1">
        <Icon name="search" className="size-[14px] text-[#555]" />
        <input aria-label="Search View Map" placeholder="Search View Map" className="ml-1 w-full placeholder:text-[#555]" />
      </label>
      <ul className="min-h-0 flex-1 overflow-hidden bg-white pt-[2px]">
        {viewMap.map((n) => (
          <li key={n.text} className={`flex h-[22px] items-center whitespace-nowrap ${indents[n.level]}`}>
            <span className="mr-[2px] flex w-3 shrink-0 justify-center">
              {n.open !== undefined && <Chevron className={n.open ? 'text-[#444]' : '-rotate-90 text-[#999]'} />}
            </span>
            <Icon
              name={n.icon}
              className={n.icon === 'folder' ? 'size-[22px]' : 'mx-px size-5 text-[#3f7fd0]'}
            />
            <span className="ml-[5px]">{n.text}</span>
          </li>
        ))}
      </ul>
      <div className="flex h-[15px] shrink-0 items-center text-[#555]">
        <span className="flex w-3.5 justify-center"><Chevron className="rotate-90" /></span>
        <span className="h-full w-[131px] bg-[#cdcdcd]" />
        <span className="flex flex-1 justify-end"><Chevron className="-rotate-90" /></span>
      </div>
      <div className="flex h-[35px] shrink-0 items-center gap-2.5 pl-1">
        <button aria-label="Save view"><Icon name="addHouse" className="size-5" /></button>
        <button aria-label="Clone folder"><Icon name="cloneHouse" className="size-5" /></button>
        <button aria-label="New folder"><Icon name="addFolder" className="size-5" /></button>
        <button aria-label="View settings" disabled className="text-[#a8c4f0]"><Icon name="listBox" className="size-[18px]" /></button>
        <button aria-label="Delete view" disabled className="text-[#f2a892]"><Icon name="cross" className="size-[17px]" /></button>
      </div>
      <button className="flex h-[22px] shrink-0 items-center gap-[14px] rounded-l-sm bg-[#d6d6d6] pl-1.5">
        <Down />
        Properties
      </button>
      <p className="h-[111px] shrink-0 pt-1 text-center">No Selection.</p>
    </aside>
  );
}

const combinations = [
  'A-00-All layers',
  'A-11-Site plan',
  'A-11-Site survey',
  'A-21-Concept plan',
  'A-21-Grid',
  'A-22-Concept section',
  'A-23-Concept elevation',
  'A-31-GA plan',
  'A-32-GA section',
  'A-33-GA elevation',
  'A-41-Detail plan',
  'A-42-Detail section',
  'A-43-Detail elevation',
  'A-43-Interior elevation',
  'A-44-RCP',
  'A-45-Floor Finishes',
  'A-45-Wall Finishes',
  'A-46 Strategy structure',
  'A-46-Strategy acoustic',
  'A-46-Strategy drainage',
];

const layers = [
  { name: 'Exterior Walls', visible: true },
  { name: 'Interior Walls', visible: false },
];

function CombinationsPane() {
  const off = 'flex h-[22px] w-[43px] items-center justify-center border border-[#bfbfbf] bg-[#ccc]';
  return (
    <section className="flex w-[310px] flex-col pt-3 pb-2.5 pl-2.5">
      <h2 className="h-7 leading-5 font-bold">Layer Combinations</h2>
      <div className="flex min-h-0 flex-1">
        <div className="w-[274px] overflow-hidden bg-white">
          <table className="w-full table-fixed">
            <thead>
              <tr className="h-[19px] text-left leading-[19px]">
                <th className="w-[164px] border-r border-[#dcdcdc] px-[3px] font-normal">Name</th>
                <th className="px-[3px] font-normal">Status</th>
              </tr>
            </thead>
            <tbody>
              {combinations.map((c) => (
                <tr key={c} className="h-[19px] leading-[19px]">
                  <td className="border-r border-[#777] px-[3px]">{c}</td>
                  <td />
                </tr>
              ))}
            </tbody>
          </table>
        </div>
        <div className="mt-[18px] flex w-[15px] flex-col items-center text-[#555]">
          <span className="flex h-[17px] items-center"><Chevron className="rotate-180" /></span>
          <span className="h-[189px] w-full bg-[#cdcdcd]" />
          <span className="mt-auto flex h-[17px] items-center"><Chevron /></span>
        </div>
      </div>
      <div className="mt-2.5 flex gap-3 pl-px">
        <button className={`${box} h-[22px] w-[88px] justify-center gap-1`}>
          <Icon name="plus" className="size-[18px]" />
          New...
        </button>
        <button aria-label="Rename combination" disabled className={`${off} text-[#999]`}><Icon name="rename" className="size-[18px]" /></button>
        <button aria-label="Update combination" disabled className={`${off} text-[#86bf9c]`}><Icon name="refresh" className="size-[17px]" /></button>
        <button aria-label="Delete combination" disabled className={`${off} text-[#e8a08e]`}><Icon name="cross" className="size-[15px]" /></button>
      </div>
    </section>
  );
}

function LayersPane() {
  return (
    <section className="flex min-w-0 flex-1 flex-col px-[15px] pt-3 pb-2.5">
      <h2 className="h-7 leading-5 font-bold">Layers</h2>
      <div className="flex items-center">
        <label className="flex h-[23px] flex-1 items-center border border-[#7a7a7a] bg-white pl-1">
          <Icon name="search" className="size-[14px] text-[#555]" />
          <input aria-label="Search Layers" placeholder="Search Layers" className="ml-1 w-full placeholder:text-[#555]" />
        </label>
        <button aria-label="Tree view" className="ml-[5px] flex h-[22px] w-[23px] items-center justify-center border border-[#98c6e8] bg-[#c0dcf2]">
          <Icon name="treeView" className="size-[17px]" />
        </button>
        <button aria-label="List view" className="mr-[2px] ml-[3px]"><Icon name="listView" className="size-4" /></button>
      </div>
      <div className="mt-[7px] flex h-[102px]">
        <ul className="flex-1 bg-white">
          {['Reference', 'Revisions', 'Site', 'TEST'].map((f) => (
            <li key={f} className={`flex h-[22px] items-center pl-7 ${f === 'TEST' ? 'bg-[#cde8ff]' : ''}`}>
              <Icon name="folder" className="size-[23px]" />
              <span className="ml-[3px]">{f}</span>
            </li>
          ))}
        </ul>
        <div className="flex w-[15px] flex-col items-center text-[#555]">
          <span className="flex h-[17px] items-center"><Chevron className="rotate-180" /></span>
          <span className="mt-auto h-6 w-full bg-[#cdcdcd]" />
          <span className="flex h-[17px] items-center"><Chevron /></span>
        </div>
      </div>
      <div className="my-[5px] h-[5px] bg-[#f8f8f8]" />
      <div className="relative flex min-h-0 flex-1">
        <div className="flex-1 bg-white">
          <table className="w-full table-fixed">
            <thead>
              <tr className="h-[18px] text-left leading-[18px] [&>th]:border-r [&>th]:border-[#dcdcdc] [&>th]:font-normal">
                <th className="w-[23px]" aria-label="Visibility" />
                <th className="w-6" aria-label="Model display" />
                <th className="px-[3px]">Name</th>
                <th className="w-[85px] px-[3px]">Extension</th>
                <th className="w-6" aria-label="Lock" />
                <th className="w-6" aria-label="Solid" />
                <th className="w-10 border-r-0!" aria-label="Intersection group">
                  <Icon name="hatch" className="mx-auto size-4" />
                </th>
              </tr>
            </thead>
            <tbody>
              {layers.map((l) => (
                <tr key={l.name} className="h-[21px] border-b border-[#eee] leading-5">
                  <td><Icon name={l.visible ? 'eye' : 'eyeOff'} className="ml-1 size-4" /></td>
                  <td><Icon name="layer" className="ml-[5px] size-4" /></td>
                  <td className="px-[3px]">{l.name}</td>
                  <td />
                  <td><Icon name="unlock" className="ml-[3px] size-4" /></td>
                  <td><Icon name="solid" className="ml-1 size-4" /></td>
                  <td className="text-center">1</td>
                </tr>
              ))}
            </tbody>
          </table>
        </div>
        <div className="flex w-[15px] flex-col items-center justify-between pt-[23px] pb-1.5 text-[#bbb]">
          <Chevron className="rotate-180" />
          <Chevron />
        </div>
        <div className="absolute top-2.5 right-[11px] -left-[5px] h-[55px] border-[5px] border-[#ff7f27]" />
      </div>
      <div className="mt-[11px] flex gap-3 pl-px">
        <div className="flex h-[22px] w-[118px] border border-[#adadad] bg-[#e1e1e1]">
          <button className="flex flex-1 items-center justify-center gap-1">
            <Icon name="plus" className="size-[18px]" />
            New
          </button>
          <button aria-label="New options" className="my-px flex w-[22px] items-center justify-center border-l border-[#adadad]"><Down /></button>
        </div>
        <button aria-label="New folder" className={`${box} h-[22px] w-[43px] justify-center`}><Icon name="newFolder" className="size-[18px]" /></button>
        <button aria-label="Rename layer" className={`${box} h-[22px] w-[43px] justify-center`}><Icon name="rename" className="size-[18px]" /></button>
        <button aria-label="Delete layer" className={`${box} h-[22px] w-[43px] justify-center text-[#e2502c]`}><Icon name="cross" className="size-[15px]" /></button>
      </div>
      <div className="mt-3 flex justify-end gap-3 border-t border-[#a0a0a0] pt-3">
        <button className={`${box} h-[22px] w-[88px] justify-center`}>Cancel</button>
        <button className="h-[22px] w-[88px] border-2 border-[#1f73ad] bg-[#e1e1e1]">OK</button>
      </div>
    </section>
  );
}

function LayersDialog() {
  return (
    <div
      role="dialog"
      aria-label="Layers (Model Views)"
      className="absolute top-[432px] left-[317px] flex h-[504px] w-[960px] flex-col border border-[#6a6a6a] bg-[#f0f0f0] shadow-[2px_4px_14px_2px_rgba(0,0,0,0.35)]"
    >
      <header className="flex h-[30px] shrink-0 items-center bg-white pr-4 pl-2.5">
        <svg viewBox="0 0 14 14" className="size-[14px]" fill="none" aria-hidden="true">
          <path d="M1 13h12V7c-1-6-7-6-9 0z" fill="#e3eaf6" />
          <path d="M1 11C4 4 6 1 9 1s3 2 3 4" stroke="#3d68b2" strokeWidth="2" />
          <path d="M12 7.500v1.500" stroke="#223a70" strokeWidth="2" />
        </svg>
        <h1 className="ml-1.5 flex-1">Layers (Model Views)</h1>
        <button aria-label="Help" className="w-10 text-sm">?</button>
        <button aria-label="Close" className="ml-5">
          <svg viewBox="0 0 12 12" className="size-3 stroke-black" aria-hidden="true">
            <path d="M1 1l10 10M11 1L1 11" />
          </svg>
        </button>
      </header>
      <div className="flex min-h-0 flex-1">
        <CombinationsPane />
        <div className="w-[5px] bg-[#f8f8f8] pt-1">
          <svg viewBox="0 0 4 8" className="h-2 w-1 fill-[#333]" aria-hidden="true">
            <path d="M4 0v8L0 4z" />
          </svg>
        </div>
        <LayersPane />
      </div>
      <svg viewBox="0 0 9 9" className="absolute right-[2px] bottom-[2px] size-[9px] fill-[#bbb]" aria-hidden="true">
        <path d="M6 0h2v2H6zM6 3h2v2H6zM3 3h2v2H3zM6 6h2v2H6zM3 6h2v2H3zM0 6h2v2H0z" />
      </svg>
    </div>
  );
}

export default function App() {
  return (
    <div className="relative flex h-screen flex-col overflow-hidden bg-[#f0f0f0] font-['Open_Sans',sans-serif] text-[11px] text-[#111]">
      <nav className="flex h-[18px] shrink-0 items-center gap-[14px] bg-white pt-px pl-1 text-[#707070]">
        {['File', 'Edit', 'View', 'Design', 'Document', 'Options', 'Teamwork', 'Window', 'Help'].map((m) => (
          <button key={m}>{m}</button>
        ))}
        <span className="ml-auto flex items-center gap-1.5 pr-[2px] text-[#aaa]">
          <button aria-label="Minimize"><span className="mt-1 block h-[2px] w-2 bg-[#aaa]" /></button>
          <button aria-label="Restore"><Icon name="restore" className="size-2" /></button>
          <button aria-label="Close"><Icon name="crossBold" className="size-2" /></button>
        </span>
      </nav>
      <ToolBar />
      <InfoBar />
      <div className="flex min-h-0 flex-1">
        <Toolbox />
        <main className="flex min-w-0 flex-1 flex-col">
          <Tabs />
          <Canvas />
          <QuickOptions />
        </main>
        <Navigator />
      </div>
      <footer className="flex h-[22px] shrink-0 items-center border-t border-[#d4d4d4]">
        <p className="flex-1">Enter First Node of Wall.</p>
        <button aria-label="Window list" className="mr-1 flex"><Icon name="windows" className="size-4" /></button>
        <p className="mr-5 flex h-full w-[131px] items-center justify-center border-x border-[#d4d4d4] font-['Lato',sans-serif] text-sm text-[#333]">
          GRAPHISOFT&nbsp;<span className="font-light">ID</span>
        </p>
      </footer>
      <LayersDialog />
    </div>
  );
}
